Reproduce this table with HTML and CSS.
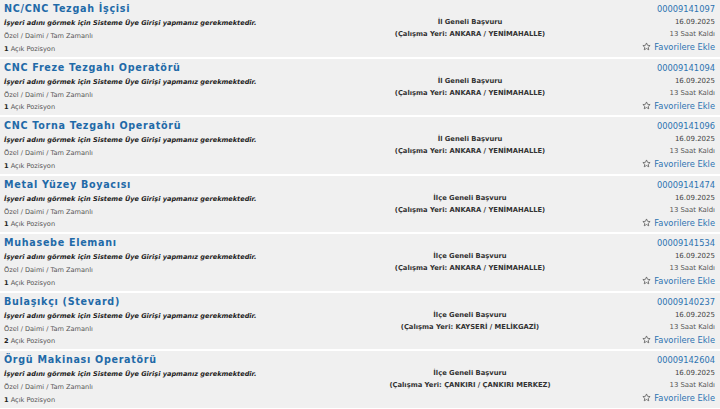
FILE: index.html
```html
<!DOCTYPE html>
<html lang="tr">
<head>
<meta charset="utf-8">
<title>İlanlar</title>
<link rel="stylesheet" href="styles.css">
</head>
<body>
<div class="list">

  <div class="row">
    <div class="col-left">
      <a class="title">NC/CNC Tezgah İşçisi</a>
      <div class="employer">İşyeri adını görmek için Sisteme Üye Girişi yapmanız gerekmektedir.</div>
      <div class="meta">Özel / Daimi / Tam Zamanlı</div>
      <div class="meta"><b>1</b> Açık Pozisyon</div>
    </div>
    <div class="col-mid">
      <div>İl Geneli Başvuru</div>
      <div>(Çalışma Yeri: ANKARA / YENİMAHALLE)</div>
    </div>
    <div class="col-right">
      <a class="id">00009141097</a>
      <div class="date">16.09.2025</div>
      <div class="left">13 Saat Kaldı</div>
      <a class="fav"><svg class="star" viewBox="0 0 24 24"><path d="M12 2.5l2.9 6.3 6.8.7-5.1 4.6 1.5 6.8L12 17.4l-6.1 3.5 1.5-6.8-5.1-4.6 6.8-.7z"/></svg>Favorilere Ekle</a>
    </div>
  </div>

  <div class="row">
    <div class="col-left">
      <a class="title">CNC Freze Tezgahı Operatörü</a>
      <div class="employer">İşyeri adını görmek için Sisteme Üye Girişi yapmanız gerekmektedir.</div>
      <div class="meta">Özel / Daimi / Tam Zamanlı</div>
      <div class="meta"><b>1</b> Açık Pozisyon</div>
    </div>
    <div class="col-mid">
      <div>İl Geneli Başvuru</div>
      <div>(Çalışma Yeri: ANKARA / YENİMAHALLE)</div>
    </div>
    <div class="col-right">
      <a class="id">00009141094</a>
      <div class="date">16.09.2025</div>
      <div class="left">13 Saat Kaldı</div>
      <a class="fav"><svg class="star" viewBox="0 0 24 24"><path d="M12 2.5l2.9 6.3 6.8.7-5.1 4.6 1.5 6.8L12 17.4l-6.1 3.5 1.5-6.8-5.1-4.6 6.8-.7z"/></svg>Favorilere Ekle</a>
    </div>
  </div>

  <div class="row">
    <div class="col-left">
      <a class="title">CNC Torna Tezgahı Operatörü</a>
      <div class="employer">İşyeri adını görmek için Sisteme Üye Girişi yapmanız gerekmektedir.</div>
      <div class="meta">Özel / Daimi / Tam Zamanlı</div>
      <div class="meta"><b>1</b> Açık Pozisyon</div>
    </div>
    <div class="col-mid">
      <div>İl Geneli Başvuru</div>
      <div>(Çalışma Yeri: ANKARA / YENİMAHALLE)</div>
    </div>
    <div class="col-right">
      <a class="id">00009141096</a>
      <div class="date">16.09.2025</div>
      <div class="left">13 Saat Kaldı</div>
      <a class="fav"><svg class="star" viewBox="0 0 24 24"><path d="M12 2.5l2.9 6.3 6.8.7-5.1 4.6 1.5 6.8L12 17.4l-6.1 3.5 1.5-6.8-5.1-4.6 6.8-.7z"/></svg>Favorilere Ekle</a>
    </div>
  </div>

  <div class="row">
    <div class="col-left">
      <a class="title">Metal Yüzey Boyacısı</a>
      <div class="employer">İşyeri adını görmek için Sisteme Üye Girişi yapmanız gerekmektedir.</div>
      <div class="meta">Özel / Daimi / Tam Zamanlı</div>
      <div class="meta"><b>1</b> Açık Pozisyon</div>
    </div>
    <div class="col-mid">
      <div>İlçe Geneli Başvuru</div>
      <div>(Çalışma Yeri: ANKARA / YENİMAHALLE)</div>
    </div>
    <div class="col-right">
      <a class="id">00009141474</a>
      <div class="date">16.09.2025</div>
      <div class="left">13 Saat Kaldı</div>
      <a class="fav"><svg class="star" viewBox="0 0 24 24"><path d="M12 2.5l2.9 6.3 6.8.7-5.1 4.6 1.5 6.8L12 17.4l-6.1 3.5 1.5-6.8-5.1-4.6 6.8-.7z"/></svg>Favorilere Ekle</a>
    </div>
  </div>

  <div class="row">
    <div class="col-left">
      <a class="title">Muhasebe Elemanı</a>
      <div class="employer">İşyeri adını görmek için Sisteme Üye Girişi yapmanız gerekmektedir.</div>
      <div class="meta">Özel / Daimi / Tam Zamanlı</div>
      <div class="meta"><b>1</b> Açık Pozisyon</div>
    </div>
    <div class="col-mid">
      <div>İlçe Geneli Başvuru</div>
      <div>(Çalışma Yeri: ANKARA / YENİMAHALLE)</div>
    </div>
    <div class="col-right">
      <a class="id">00009141534</a>
      <div class="date">16.09.2025</div>
      <div class="left">13 Saat Kaldı</div>
      <a class="fav"><svg class="star" viewBox="0 0 24 24"><path d="M12 2.5l2.9 6.3 6.8.7-5.1 4.6 1.5 6.8L12 17.4l-6.1 3.5 1.5-6.8-5.1-4.6 6.8-.7z"/></svg>Favorilere Ekle</a>
    </div>
  </div>

  <div class="row">
    <div class="col-left">
      <a class="title">Bulaşıkçı (Stevard)</a>
      <div class="employer">İşyeri adını görmek için Sisteme Üye Girişi yapmanız gerekmektedir.</div>
      <div class="meta">Özel / Daimi / Tam Zamanlı</div>
      <div class="meta"><b>2</b> Açık Pozisyon</div>
    </div>
    <div class="col-mid">
      <div>İlçe Geneli Başvuru</div>
      <div>(Çalışma Yeri: KAYSERİ / MELİKGAZİ)</div>
    </div>
    <div class="col-right">
      <a class="id">00009140237</a>
      <div class="date">16.09.2025</div>
      <div class="left">13 Saat Kaldı</div>
      <a class="fav"><svg class="star" viewBox="0 0 24 24"><path d="M12 2.5l2.9 6.3 6.8.7-5.1 4.6 1.5 6.8L12 17.4l-6.1 3.5 1.5-6.8-5.1-4.6 6.8-.7z"/></svg>Favorilere Ekle</a>
    </div>
  </div>

  <div class="row">
    <div class="col-left">
      <a class="title">Örgü Makinası Operatörü</a>
      <div class="employer">İşyeri adını görmek için Sisteme Üye Girişi yapmanız gerekmektedir.</div>
      <div class="meta">Özel / Daimi / Tam Zamanlı</div>
      <div class="meta"><b>1</b> Açık Pozisyon</div>
    </div>
    <div class="col-mid">
      <div>İlçe Geneli Başvuru</div>
      <div>(Çalışma Yeri: ÇANKIRI / ÇANKIRI MERKEZ)</div>
    </div>
    <div class="col-right">
      <a class="id">00009142604</a>
      <div class="date">16.09.2025</div>
      <div class="left">13 Saat Kaldı</div>
      <a class="fav"><svg class="star" viewBox="0 0 24 24"><path d="M12 2.5l2.9 6.3 6.8.7-5.1 4.6 1.5 6.8L12 17.4l-6.1 3.5 1.5-6.8-5.1-4.6 6.8-.7z"/></svg>Favorilere Ekle</a>
    </div>
  </div>

</div>
</body>
</html>
```

FILE: styles.css
```css
html, body {
  margin: 0;
  padding: 0;
  background: #ffffff;
}
body {
  font-family: "DejaVu Sans", Verdana, sans-serif;
  color: #333;
  overflow: hidden;
}
.list {
  display: flex;
  flex-direction: column;
  gap: 2px;
}
.row {
  background: #f0f0f0;
  height: 56.5px;
  display: grid;
  grid-template-columns: 330px 280px 1fr;
  box-sizing: border-box;
}
.col-left {
  padding: 2px 0 0 4px;
}
.title {
  display: block;
  font-size: 9.6px;
  letter-spacing: 0.7px;
  font-weight: bold;
  line-height: 14px;
  color: #1f6aa8;
}
.employer {
  font-size: 6.55px;
  font-weight: bold;
  font-style: italic;
  line-height: 14px;
  color: #222;
}
.meta {
  font-size: 6.6px;
  line-height: 12.5px;
  color: #555;
}
.meta b {
  color: #222;
}
.col-mid {
  padding-top: 16px;
  text-align: center;
  font-size: 6.75px;
  font-weight: bold;
  line-height: 12px;
  color: #333;
}
.col-right {
  padding: 2px 5px 0 0;
  text-align: right;
}
.id {
  display: block;
  font-size: 8.3px;
  line-height: 14px;
  color: #2d73b0;
}
.date {
  font-size: 7px;
  line-height: 12px;
  color: #444;
}
.left {
  font-size: 6.9px;
  line-height: 12px;
  color: #555;
}
.fav {
  display: block;
  font-size: 8.3px;
  line-height: 14px;
  color: #2d73b0;
}
.star {
  width: 9px;
  height: 9px;
  vertical-align: -1px;
  margin-right: 3px;
  fill: none;
  stroke: #555;
  stroke-width: 2;
  stroke-linejoin: round;
}
```
